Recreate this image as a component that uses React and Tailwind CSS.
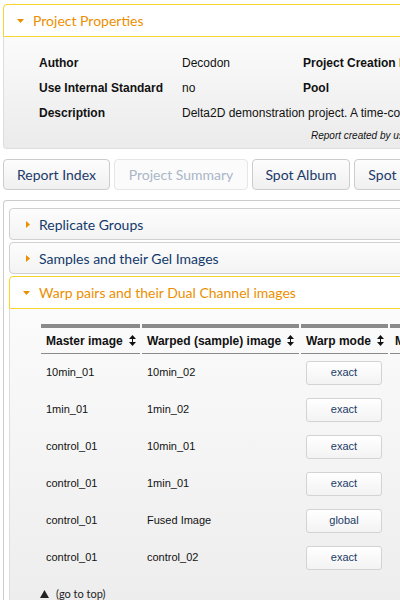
import React from "react";

const rows = [
  ["10min_01", "10min_02", "exact"],
  ["1min_01", "1min_02", "exact"],
  ["control_01", "10min_01", "exact"],
  ["control_01", "1min_01", "exact"],
  ["control_01", "Fused Image", "global"],
  ["control_01", "control_02", "exact"],
];

const uiFont = { fontFamily: "Lato, 'DejaVu Sans', sans-serif" };

const TriDown = ({ className }) => (
  <svg width="7" height="4" viewBox="0 0 7 4" className={className}>
    <path d="M0 0 L7 0 L3.5 4 Z" fill="#eb8f00" />
  </svg>
);

const TriRight = () => (
  <svg width="4" height="7" viewBox="0 0 4 7">
    <path d="M0 0 L4 3.5 L0 7 Z" fill="#eb8f00" />
  </svg>
);

const SortIcon = () => (
  <svg width="7" height="11" viewBox="0 0 7 11" className="ml-[6px] shrink-0">
    <path d="M3.5 0 L7 4 L0 4 Z" fill="#111" />
    <rect x="3" y="4" width="1" height="3" fill="#111" />
    <path d="M0 7 L7 7 L3.5 11 Z" fill="#111" />
  </svg>
);

const props = [
  ["Author", "Decodon", "Project Creation Date"],
  ["Use Internal Standard", "no", "Pool"],
  ["Description", "Delta2D demonstration project. A time-course experiment", ""],
];

const NavButton = ({ children, disabled, w }) => (
  <div
    className={`${w} h-[31px] shrink-0 flex items-center justify-center rounded-[4px] border text-[14px] ${
      disabled
        ? "border-[#e6e6e6] text-[#a9b6c8] bg-[#fbfbfb]"
        : "border-[#cccccc] text-[#1b3a68] bg-gradient-to-b from-[#fdfdfd] to-[#f0f0f0]"
    }`}
    style={uiFont}
  >
    {children}
  </div>
);

const AccHeader = ({ title }) => (
  <div
    className="h-[32px] flex items-center rounded-[4px] border border-[#d0d0d0] bg-gradient-to-b from-[#fdfdfd] to-[#f3f3f3] text-[14px] text-[#133a6b]"
    style={uiFont}
  >
    <span className="ml-[16px] mr-[9px] flex">
      <TriRight />
    </span>
    {title}
  </div>
);

export default function App() {
  return (
    <div className="w-[400px] h-[600px] overflow-hidden bg-white">
      <div className="w-[760px] pl-[3px] pt-[4px]" style={{ fontFamily: "'Liberation Sans', Arial, sans-serif" }}>
        {/* PROJECT PROPERTIES */}
        <div className="h-[33px] flex items-center border border-[#fad42e] rounded-tl-[4px] bg-white">
          <TriDown className="ml-[13px] mr-[9px]" />
          <span className="text-[14px] text-[#eb8f00]" style={uiFont}>
            Project Properties
          </span>
        </div>
        <div className="h-[112px] border-l border-b border-[#dddddd] rounded-bl-[4px] bg-gradient-to-b from-[#fbfbfb] to-[#ebebeb] pt-[13px]">
          {props.map((p) => (
            <div key={p[0]} className="h-[25px] flex items-center pl-[35px] text-[12px] text-[#111] whitespace-nowrap">
              <span className="w-[143px] font-bold shrink-0">{p[0]}</span>
              <span className={`${p[2] ? "w-[121px]" : ""} shrink-0`}>{p[1]}</span>
              {p[2] && <span className="font-bold">{p[2]}</span>}
            </div>
          ))}
          <div className="pl-[307px] pt-[3px] text-[10px] italic text-[#111] whitespace-nowrap">
            Report created by user Decodon on 2011-05-12
          </div>
        </div>

        {/* NAV */}
        <div className="flex gap-[4px] mt-[10px]">
          <NavButton w="w-[107px]">Report Index</NavButton>
          <NavButton w="w-[134px]" disabled>
            Project Summary
          </NavButton>
          <NavButton w="w-[98px]">Spot Album</NavButton>
          <NavButton w="w-[120px]">Spot Overview</NavButton>
        </div>

        {/* ACCORDION */}
        <div className="mt-[10px] border-t border-l border-[#cccccc] rounded-tl-[4px] pt-[7px] pl-[5px]">
          <div className="flex flex-col gap-[2px]">
            <AccHeader title="Replicate Groups" />
            <AccHeader title="Samples and their Gel Images" />
            <div
              className="h-[33px] flex items-center rounded-t-[4px] border border-[#fad42e] bg-white text-[14px] text-[#eb8f00]"
              style={uiFont}
            >
              <TriDown className="ml-[13px] mr-[9px]" />
              Warp pairs and their Dual Channel images
            </div>
          </div>
          <div className="h-[320px] border-l border-[#dddddd] bg-gradient-to-b from-[#fbfbfb] to-[#ececec] pl-[31px] pt-[15px]">
            <div className="flex gap-[2px]">
              {[
                ["Master image", "w-[99px]"],
                ["Warped (sample) image", "w-[157px]"],
                ["Warp mode", "w-[87px]"],
                ["Merged image", "w-[120px]"],
              ].map(([h, w]) => (
                <div key={h} className={`${w} shrink-0 border-t-4 border-b border-[#8a8a8a] h-[30px] flex items-center pl-[5px] text-[12px] font-bold text-[#111] whitespace-nowrap`}>
                  {h}
                  <SortIcon />
                </div>
              ))}
            </div>
            {rows.map((r, i) => (
              <div key={i} className="h-[37px] flex items-center text-[11px] text-[#111]">
                <span className="w-[101px] pl-[5px] shrink-0">{r[0]}</span>
                <span className="w-[159px] pl-[5px] shrink-0">{r[1]}</span>
                <span className="w-[89px] pl-[5px] shrink-0">
                  <span className="w-[76px] h-[24px] flex items-center justify-center rounded-[3px] border border-[#d3d3d3] bg-gradient-to-b from-white to-[#f3f3f3] text-[#1b3a68]">
                    {r[2]}
                  </span>
                </span>
              </div>
            ))}
            <div className="flex items-center mt-[10px] text-[11px] text-[#222]" style={uiFont}>
              <svg width="9" height="8" viewBox="0 0 9 8" className="mr-[7px] -ml-[1px]">
                <path d="M4.5 0 L9 8 L0 8 Z" fill="#222" />
              </svg>
              (go to top)
            </div>
          </div>
        </div>
      </div>
    </div>
  );
}
